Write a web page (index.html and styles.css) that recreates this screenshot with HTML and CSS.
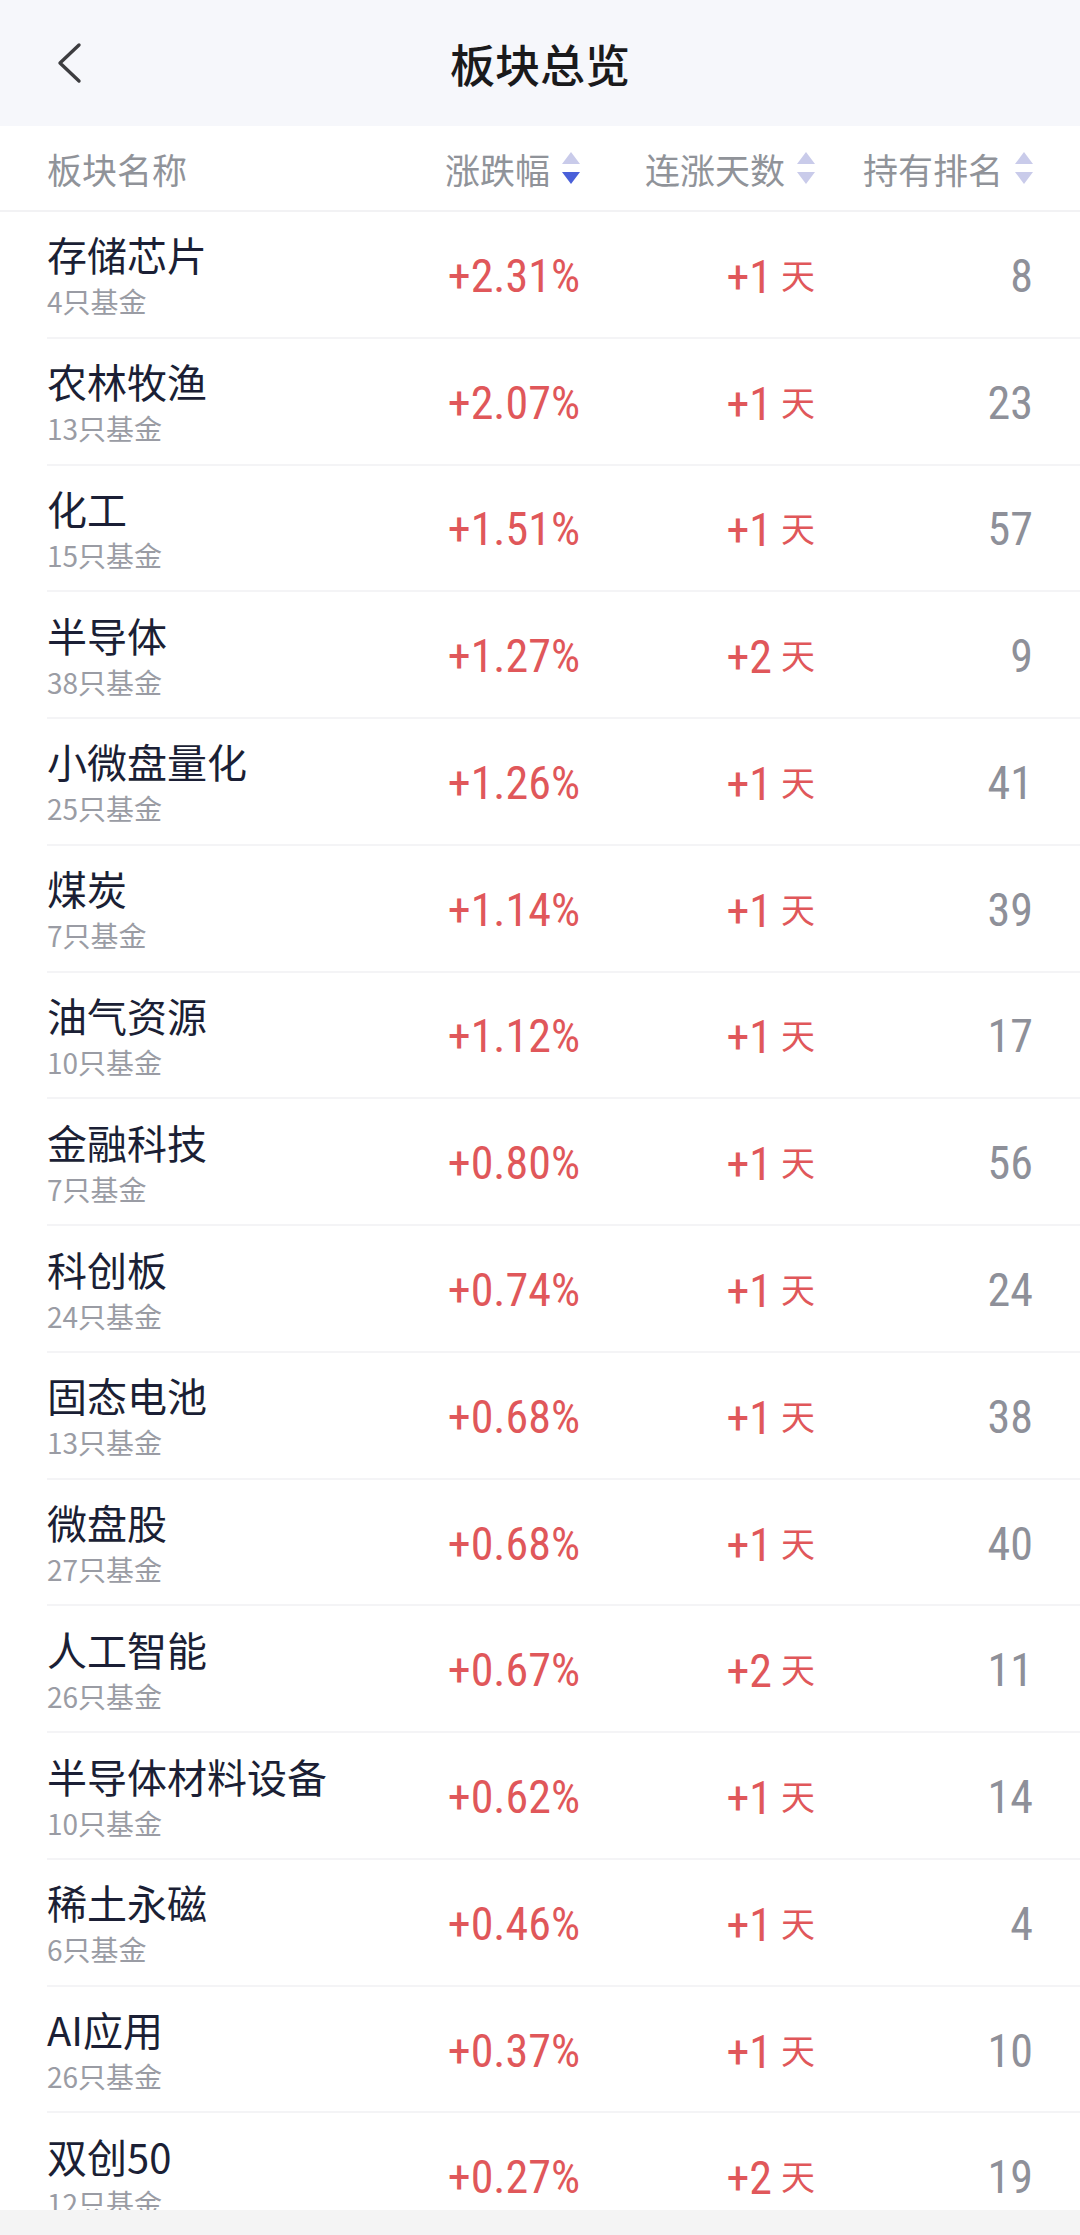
FILE: index.html
```html
<!DOCTYPE html>
<html lang="zh-CN">
<head>
<meta charset="utf-8">
<title>板块总览</title>
<link rel="stylesheet" href="styles.css">
</head>
<body>
<div class="page">
  <header class="nav">
    <div class="nav-left">
      <svg class="back" width="26" height="42" viewBox="0 0 26 42"><path d="M23 3 L4 21 L23 39" fill="none" stroke="#3d3d40" stroke-width="3.4" stroke-linecap="round" stroke-linejoin="round"/></svg>
    </div>
    <h1 class="title">板块总览</h1>
    <div class="nav-right"></div>
  </header>

  <div class="thead">
    <div class="th th-name">板块名称</div>
    <div class="th th-num">涨跌幅<svg class="sort" width="18" height="32" viewBox="0 0 18 32"><path d="M9 0 L18 12 L0 12 Z" fill="#c9cbea"/><path d="M0 20 L18 20 L9 32 Z" fill="#4a60d9"/></svg></div>
    <div class="th th-num">连涨天数<svg class="sort" width="18" height="32" viewBox="0 0 18 32"><path d="M9 0 L18 12 L0 12 Z" fill="#c9cbea"/><path d="M0 20 L18 20 L9 32 Z" fill="#c9cbea"/></svg></div>
    <div class="th th-num">持有排名<svg class="sort" width="18" height="32" viewBox="0 0 18 32"><path d="M9 0 L18 12 L0 12 Z" fill="#c9cbea"/><path d="M0 20 L18 20 L9 32 Z" fill="#c9cbea"/></svg></div>
  </div>

  <ul class="list">
    <li class="row"><div class="name"><span class="n">存储芯片</span><span class="s">4只基金</span></div><div class="pct">+2.31%</div><div class="days">+1<span class="d">天</span></div><div class="rank">8</div></li>
    <li class="row"><div class="name"><span class="n">农林牧渔</span><span class="s">13只基金</span></div><div class="pct">+2.07%</div><div class="days">+1<span class="d">天</span></div><div class="rank">23</div></li>
    <li class="row"><div class="name"><span class="n">化工</span><span class="s">15只基金</span></div><div class="pct">+1.51%</div><div class="days">+1<span class="d">天</span></div><div class="rank">57</div></li>
    <li class="row"><div class="name"><span class="n">半导体</span><span class="s">38只基金</span></div><div class="pct">+1.27%</div><div class="days">+2<span class="d">天</span></div><div class="rank">9</div></li>
    <li class="row"><div class="name"><span class="n">小微盘量化</span><span class="s">25只基金</span></div><div class="pct">+1.26%</div><div class="days">+1<span class="d">天</span></div><div class="rank">41</div></li>
    <li class="row"><div class="name"><span class="n">煤炭</span><span class="s">7只基金</span></div><div class="pct">+1.14%</div><div class="days">+1<span class="d">天</span></div><div class="rank">39</div></li>
    <li class="row"><div class="name"><span class="n">油气资源</span><span class="s">10只基金</span></div><div class="pct">+1.12%</div><div class="days">+1<span class="d">天</span></div><div class="rank">17</div></li>
    <li class="row"><div class="name"><span class="n">金融科技</span><span class="s">7只基金</span></div><div class="pct">+0.80%</div><div class="days">+1<span class="d">天</span></div><div class="rank">56</div></li>
    <li class="row"><div class="name"><span class="n">科创板</span><span class="s">24只基金</span></div><div class="pct">+0.74%</div><div class="days">+1<span class="d">天</span></div><div class="rank">24</div></li>
    <li class="row"><div class="name"><span class="n">固态电池</span><span class="s">13只基金</span></div><div class="pct">+0.68%</div><div class="days">+1<span class="d">天</span></div><div class="rank">38</div></li>
    <li class="row"><div class="name"><span class="n">微盘股</span><span class="s">27只基金</span></div><div class="pct">+0.68%</div><div class="days">+1<span class="d">天</span></div><div class="rank">40</div></li>
    <li class="row"><div class="name"><span class="n">人工智能</span><span class="s">26只基金</span></div><div class="pct">+0.67%</div><div class="days">+2<span class="d">天</span></div><div class="rank">11</div></li>
    <li class="row"><div class="name"><span class="n">半导体材料设备</span><span class="s">10只基金</span></div><div class="pct">+0.62%</div><div class="days">+1<span class="d">天</span></div><div class="rank">14</div></li>
    <li class="row"><div class="name"><span class="n">稀土永磁</span><span class="s">6只基金</span></div><div class="pct">+0.46%</div><div class="days">+1<span class="d">天</span></div><div class="rank">4</div></li>
    <li class="row"><div class="name"><span class="n">AI应用</span><span class="s">26只基金</span></div><div class="pct">+0.37%</div><div class="days">+1<span class="d">天</span></div><div class="rank">10</div></li>
    <li class="row"><div class="name"><span class="n">双创50</span><span class="s">12只基金</span></div><div class="pct">+0.27%</div><div class="days">+2<span class="d">天</span></div><div class="rank">19</div></li>
  </ul>

  <div class="sysbar"></div>
</div>
</body>
</html>
```

FILE: styles.css
```css
* { box-sizing: border-box; }
html, body { margin: 0; padding: 0; }
body {
  background: #ffffff;
  font-family: "Noto Sans CJK SC", "Noto Sans", sans-serif;
  color: #1b1f35;
}
.page {
  width: 1080px;
  height: 2235px;
  display: flex;
  flex-direction: column;
  overflow: hidden;
}
.nav {
  flex: 0 0 126px;
  height: 126px;
  background: #f6f7fb;
  display: grid;
  grid-template-columns: 1fr auto 1fr;
  align-items: center;
}
.nav-left { padding-left: 56px; display: flex; align-items: center; }
.back { display: block; }
.title {
  margin: 0;
  font-size: 45px;
  font-weight: 500;
  color: #1a1a1c;
  line-height: 1;
  letter-spacing: 0;
}
.thead {
  flex: 0 0 86px;
  height: 86px;
  display: grid;
  grid-template-columns: 1fr 200px 235px 218px;
  align-items: center;
  padding: 0 47px;
  border-bottom: 2px solid #f2f2f4;
}
.th {
  font-size: 35px;
  color: #909399;
  line-height: 1;
}
.th-num {
  display: flex;
  justify-content: flex-end;
  align-items: center;
  gap: 12px;
}
.sort { display: block; flex: none; }
.list {
  list-style: none;
  margin: 0;
  padding: 0 0 0 47px;
  flex: 1 1 auto;
  min-height: 0;
  overflow: hidden;
}
.row {
  height: 126.77px;
  display: grid;
  grid-template-columns: 1fr 200px 235px 218px;
  align-items: center;
  padding-right: 47px;
  border-bottom: 2px solid #f4f4f6;
}
.name {
  display: flex;
  flex-direction: column;
  justify-content: center;
}
.n {
  font-size: 40px;
  line-height: 48px;
  color: #1b1f35;
}
.s {
  font-size: 28px;
  line-height: 34px;
  margin-top: 6px;
  color: #9a9ca4;
}
.pct, .days, .rank {
  font-family: "Liberation Sans Narrow", "Roboto Condensed", "DejaVu Sans Condensed", sans-serif;
  font-size: 46px;
  line-height: 46px;
  text-align: right;
  padding-top: 3px;
}
.pct, .days { color: #e0575a; }
.rank { color: #8e9099; }
.d {
  font-family: "Noto Sans CJK SC", sans-serif;
  font-size: 34px;
  margin-left: 9px;
  vertical-align: 4px;
}
.sysbar {
  flex: 0 0 25px;
  height: 25px;
  background: #f4f4f4;
}
```
